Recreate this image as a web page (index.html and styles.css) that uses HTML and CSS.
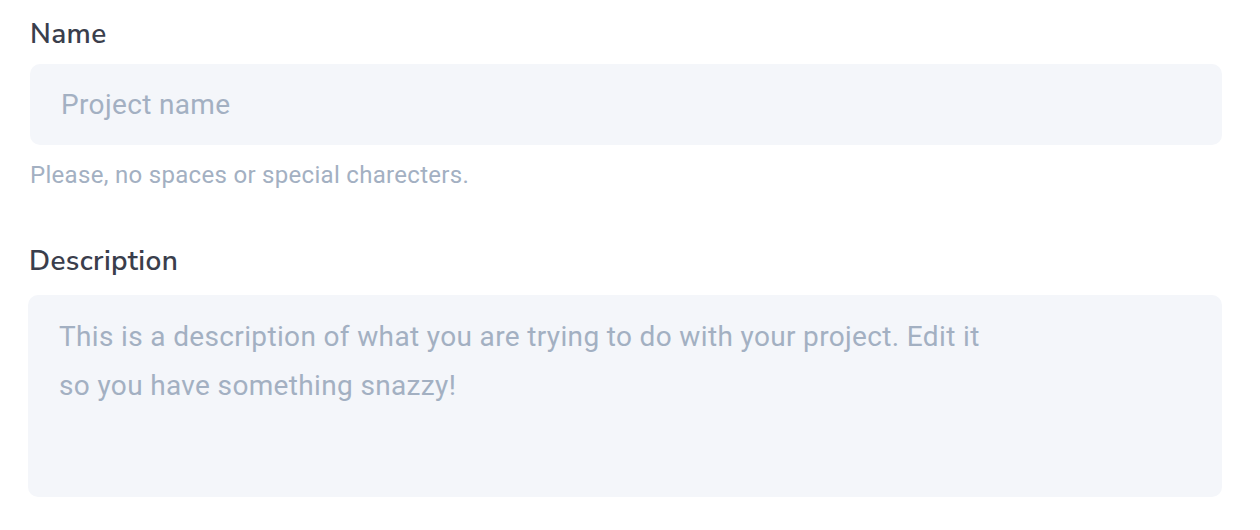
FILE: index.html
```html
<!DOCTYPE html>
<html>
<head>
<meta charset="utf-8">
<link rel="stylesheet" href="styles.css">
</head>
<body>
<form class="form">
  <div class="field field-name">
    <div class="label">Name</div>
    <div class="input">Project name</div>
    <div class="help">Please, no spaces or special charecters.</div>
  </div>
  <div class="field field-desc">
    <div class="label label-desc">Description</div>
    <div class="textarea"><span class="ta-text">This is a description of what you are trying to do with your project. Edit it so you have something snazzy!</span></div>
  </div>
</form>
</body>
</html>
```
FILE: styles.css
```css
html, body {
  margin: 0;
  padding: 0;
  background: #ffffff;
}
.form {
  width: 1260px;
  padding: 14px 38px 0 30px;
  box-sizing: border-box;
  display: flex;
  flex-direction: column;
}
.field {
  display: flex;
  flex-direction: column;
}
.label {
  font-family: "Nunito Sans", Lato, "Open Sans", sans-serif;
  font-size: 28px;
  line-height: 40px;
  letter-spacing: 0.35px;
  color: #3a3e4c;
  font-weight: 600;
  margin-bottom: 10px;
}
.label-desc {
  margin-left: -1px;
  margin-bottom: 14px;
}
.input {
  background: #f4f6fa;
  border-radius: 10px;
  height: 81px;
  line-height: 82px;
  padding-left: 31px;
  font-family: Roboto, "Liberation Sans", sans-serif;
  font-size: 28px;
  letter-spacing: 0.35px;
  color: #a3b0c2;
}
.help {
  margin-top: 14px;
  font-family: Roboto, "Liberation Sans", sans-serif;
  font-size: 24px;
  line-height: 32px;
  letter-spacing: 0.3px;
  color: #a3b0c2;
}
.field-desc {
  margin-top: 50px;
}
.textarea {
  margin-left: -2px;
  background: #f4f6fa;
  border-radius: 10px;
  height: 202px;
  box-sizing: border-box;
  padding: 17px 31px 0 31px;
  font-family: Roboto, "Liberation Sans", sans-serif;
  font-size: 28px;
  line-height: 49px;
  letter-spacing: 0.35px;
  color: #a3b0c2;
}
.ta-text {
  display: block;
  max-width: 940px;
}
```
